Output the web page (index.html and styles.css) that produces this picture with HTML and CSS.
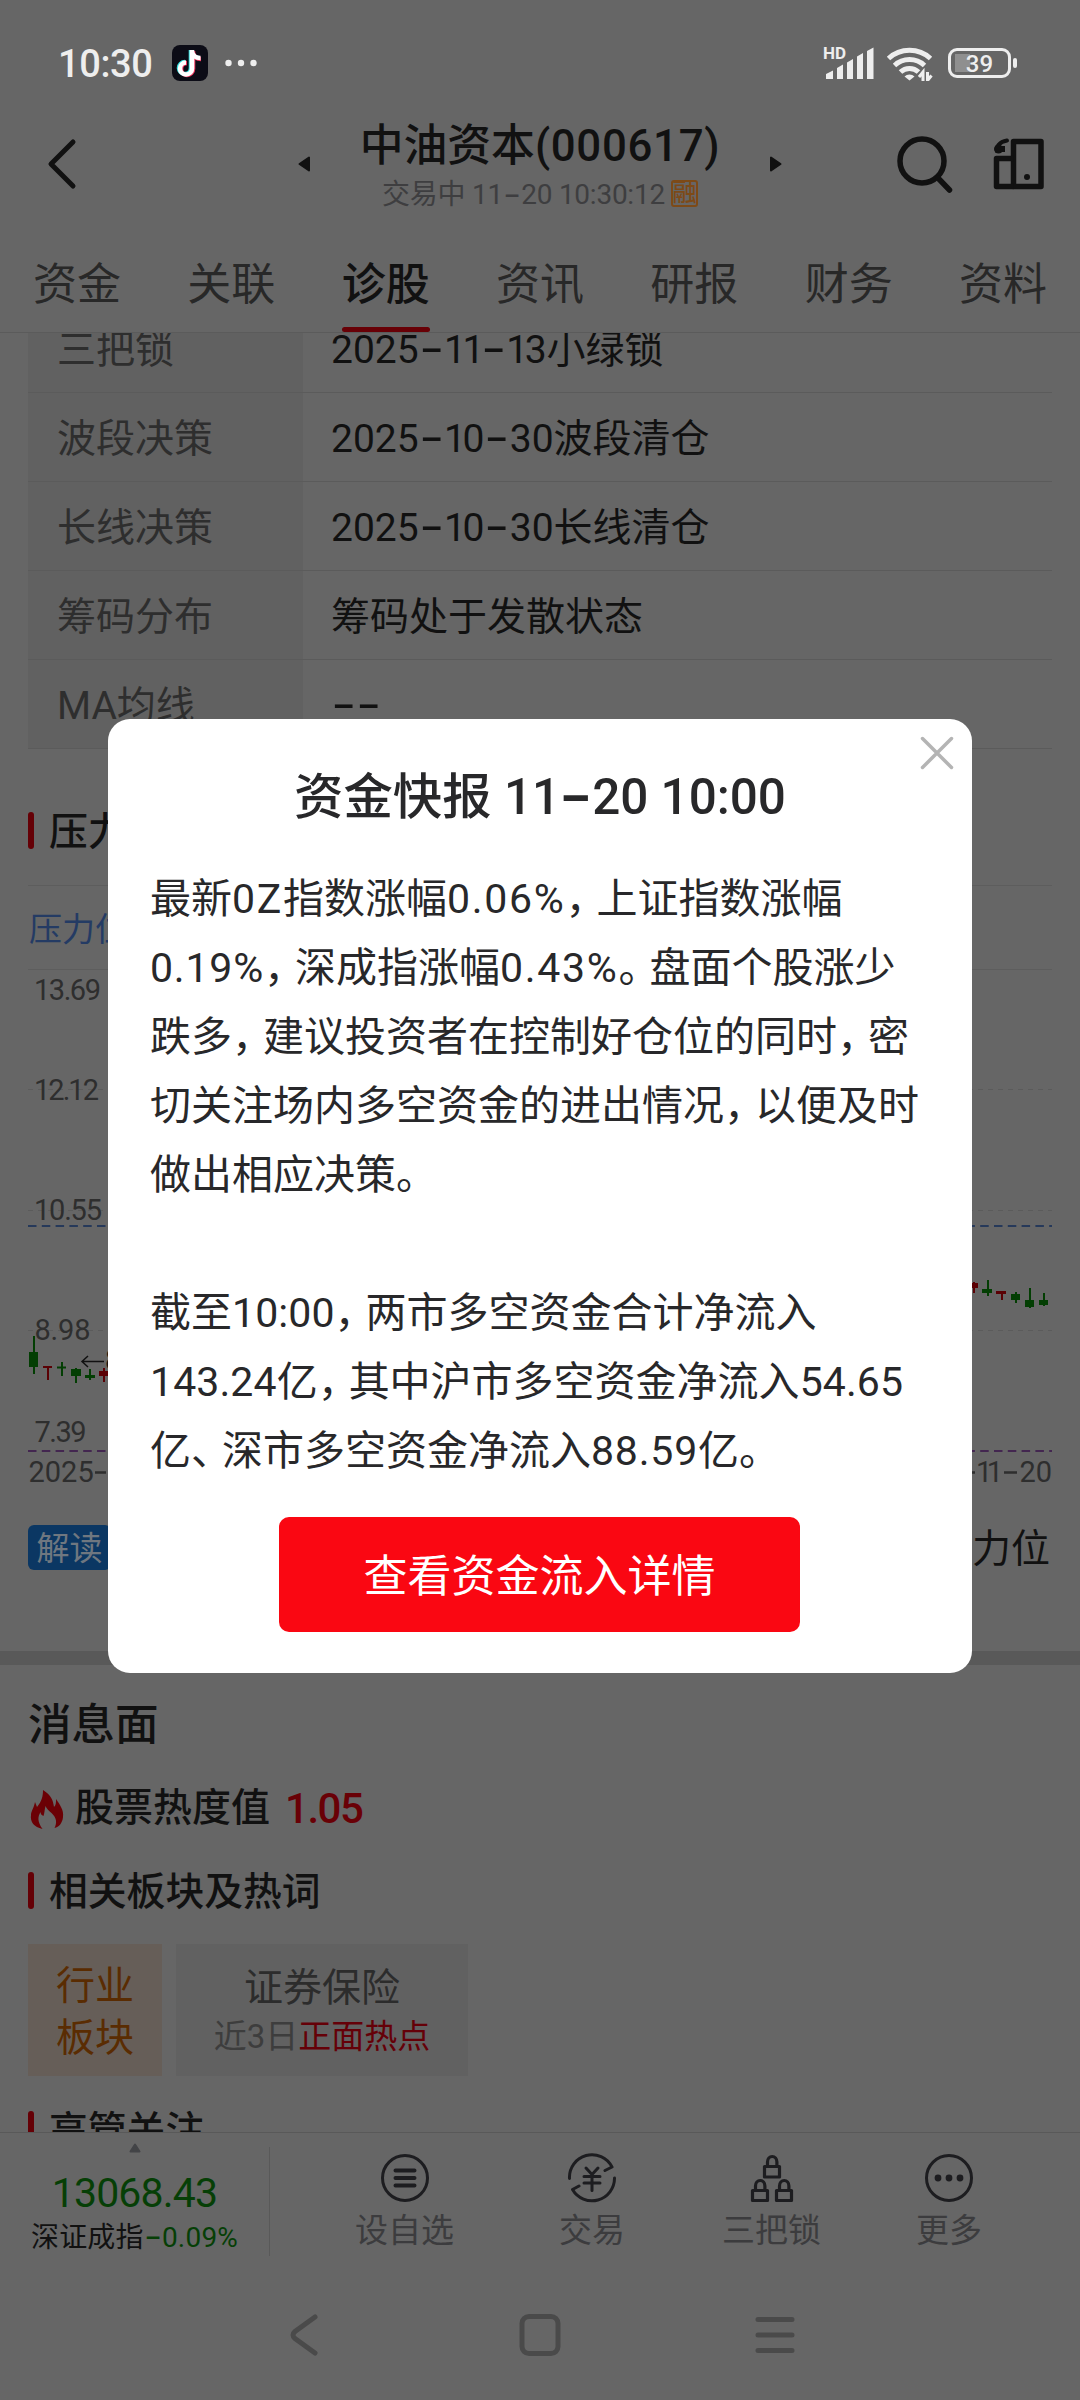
FILE: index.html
```html
<!DOCTYPE html>
<html lang="zh-CN">
<head>
<meta charset="utf-8">
<title>中油资本(000617)</title>
<link rel="stylesheet" href="styles.css">
</head>
<body>
<div class="screen">
  <header class="status">
    <span class="clock">10:30</span>
    <svg class="app" width="36" height="36" viewBox="0 0 36 36"><rect width="36" height="36" rx="8" fill="#0c0c16"/><g fill="none" stroke-width="4.6"><path d="M19 5v18a6 6 0 1 1-6-6M19 7c1 4 4 6 8 6" stroke="#35e0e0"/><path d="M21 6v18a6 6 0 1 1-6-6M21 8c1 4 4 6 8 6" stroke="#f0345c"/><path d="M20 5v18.500a6 6 0 1 1-6-6M20 7c1 4 4 6 8.500 6" stroke="#fff"/></g></svg>
    <svg class="dots" width="32" height="8" viewBox="0 0 32 8"><g fill="#eee"><circle cx="3.500" cy="4" r="3.200"/><circle cx="16" cy="4" r="3.200"/><circle cx="28.500" cy="4" r="3.200"/></g></svg>
    <div class="signal"><span class="hd">HD</span>
      <svg width="52" height="34" viewBox="0 0 52 34"><g fill="#eee"><path d="M3 28l7-3.500V33H3zM14 22l6-3.500V33h-6zM24 16.500l6-3.500V33h-6zM34 10.500l6-3.500V33h-6zM44 5l6.500-3.500V33H44z"/></g></svg></div>
    <svg class="wifi" width="48" height="36" viewBox="0 0 48 36"><g fill="none" stroke="#eee" stroke-width="5"><path d="M2.500 13.500a31 31 0 0 1 42 0"/><path d="M8.500 20.500a22 22 0 0 1 30 0"/><path d="M14.500 27a13 13 0 0 1 18 0"/></g><path d="M18.500 31.500a7 7 0 0 1 10 0l-5 4z" fill="#eee"/><path d="M37.500 36v-9.500l-5 5.500M41.500 26.500V36l4-5" fill="none" stroke="#666" stroke-width="5"/><path d="M37 36v-9l-4 5M41.500 27v8.500l4-5" fill="none" stroke="#eee" stroke-width="3"/></svg>
    <div class="battery"><span>39</span></div><i class="knob"></i>
  </header>

  <div class="top">
    <svg class="back" width="32" height="52" viewBox="0 0 32 52"><path d="M27 4L5 26l22 22" fill="none" stroke="#111" stroke-width="5" stroke-linecap="round" stroke-linejoin="round"/></svg>
    <svg class="prev" width="13" height="16" viewBox="0 0 13 16"><path d="M1.500 8L11 1.500v13z" fill="#111" stroke="#111" stroke-width="2" stroke-linejoin="round"/></svg>
    <div class="names">
      <h1>中油资本<span>(000617)</span></h1>
      <p><span>交易中 11<i class="h">-</i>20 10:30:12</span><b>融</b></p>
    </div>
    <svg class="next" width="13" height="16" viewBox="0 0 13 16"><path d="M11.500 8L2 1.500v13z" fill="#111" stroke="#111" stroke-width="2" stroke-linejoin="round"/></svg>
    <svg class="search" width="58" height="60" viewBox="0 0 58 60"><g fill="none" stroke="#111" stroke-width="5.500" stroke-linecap="round"><circle cx="26" cy="26" r="22"/><path d="M42 43l11.500 12"/></g></svg>
    <svg class="phone" width="52" height="52" viewBox="0 0 52 52"><g fill="none" stroke="#111" stroke-width="5.500" stroke-linejoin="round"><rect x="20.500" y="3.500" width="27.500" height="45"/><path d="M20.500 20.500H3.500v28h17"/></g><path d="M14 2.500C6 4 3 9 4 13" fill="none" stroke="#111" stroke-width="4" stroke-linecap="round"/><circle cx="5.500" cy="11" r="4.500" fill="#111"/><path d="M5 8h7v6H5z" fill="#111"/><circle cx="34" cy="39" r="3" fill="#111"/></svg>
  </div>

  <nav class="tabs"><a>资金</a><a>关联</a><a class="on">诊股</a><a>资讯</a><a>研报</a><a>财务</a><a>资料</a></nav>

  <main>
    <div class="table">
      <div class="tr"><span>三把锁</span><span>2025<i class="h">-</i><s class="n">11</s><i class="h">-</i><s class="n">1</s>3小绿锁</span></div>
      <div class="tr"><span>波段决策</span><span>2025<i class="h">-</i><s class="n">1</s>0<i class="h">-</i>30波段清仓</span></div>
      <div class="tr"><span>长线决策</span><span>2025<i class="h">-</i><s class="n">1</s>0<i class="h">-</i>30长线清仓</span></div>
      <div class="tr"><span>筹码分布</span><span>筹码处于发散状态</span></div>
      <div class="tr"><span>MA均线</span><span><i class="h">-</i><i class="h">-</i></span></div>
    </div>
    <h3 class="pressure">压力</h3>
    <p class="legend">压力位</p>
    <svg class="chart" width="1024" height="530" viewBox="28 970 1024 530">
      <g stroke="#5b5b5b" stroke-width="1" stroke-dasharray="5 5"><path d="M28 1089.500H1052M28 1210.500H1052M28 1330.500H1052"/></g>
      <path d="M28 1226H1052" stroke="#26395a" stroke-width="2" stroke-dasharray="8.500 5.300"/>
      <path d="M28 1451H1052" stroke="#432650" stroke-width="2" stroke-dasharray="8.500 5.300"/>
      <g class="scale"><text x="34" y="1000" textLength="67">13.69</text><text x="34" y="1100" textLength="65">12.12</text><text x="34" y="1220" textLength="68">10.55</text><text x="34.500" y="1340" textLength="56">8.98</text><text x="34.500" y="1442" textLength="52">7.39</text><text x="28.500" y="1482">2025</text><text x="1052" y="1482" text-anchor="end">20</text><text x="976" y="1482" textLength="27">11</text></g>
      <path d="M95 1472.500H106M972 1472.500H975M1004 1472.500H1017" stroke="#2e2e2e" stroke-width="2.500"/>
      <g fill="#033e03"><path d="M29 1352h9v15h-9zM33 1336h2v38h-2zM57 1366.500h9v2h-9zM61 1362h2v14h-2zM71 1369h10v7H71zM75 1368h2v15h-2zM85 1375h10v3H85zM89 1369h2v11h-2zM982 1289h10v4h-10zM987 1280h2v16h-2zM1011 1294h9v6h-9zM1015 1292h2v11h-2zM1025 1300h9v7h-9zM1029 1288h2v20h-2zM1039 1300h9v5h-9zM1043 1293h2v13h-2z"/></g>
      <g fill="#5a0004"><path d="M43 1366h9v2h-9zM47 1366h2v14h-2zM99 1371h10v5H99zM103 1368h2v14h-2zM969 1283h9v5h-9zM973 1282h2v11h-2zM996 1291h10v3h-10zM1001 1291h2v9h-2z"/></g>
      <path d="M104 1361.500H82M88 1356l-6 5.500 6 5.500" fill="none" stroke="#111" stroke-width="1.500"/>
      <text class="mark" x="105" y="1370">8</text>
    </svg>
    <div class="read"><b>解读</b><span>力位</span></div>
    <div class="gap"></div>
    <h2>消息面</h2>
    <p class="hot"><svg width="36" height="40" viewBox="0 0 36 40"><path d="M14 1c8 5 10 10 11 17 2-2 2-4 2-8 4 6 8 11 7 18-.5 6-4 10-8.500 11 2.500-5 2.500-10-3-15-3-2-5-5-6-7-1 4-1 7-2 10-2-1-3-2-3-4-3 5-3 10 2 17C5 38 1 33 2 26c0-4 3-7 4-13l2 5C13 12 14 7 14 1z" fill="#6b0005"/></svg><span>股票热度值</span><b>1.05</b></p>
    <h3>相关板块及热词</h3>
    <div class="cards">
      <div class="kind">行业<br>板块</div>
      <div class="card"><span>证券保险</span><small>近3日<em>正面热点</em></small></div>
    </div>
    <h3>高管关注</h3>
  </main>

  <footer class="bar">
    <div class="index">
      <svg width="12" height="10" viewBox="0 0 12 10"><path d="M6 1.500L10.500 8.500H1.500z" fill="#434447" stroke="#434447" stroke-width="2" stroke-linejoin="round"/></svg>
      <strong>13068.43</strong>
      <p>深证成指<span><i class="h">-</i>0.09%</span></p>
    </div>
    <div class="act a1"><svg width="50" height="50" viewBox="0 0 50 50"><g fill="none" stroke="#1d1d20" stroke-linecap="round"><circle cx="25" cy="25" r="22.500" stroke-width="3"/><path d="M15.500 17.500h19M15.500 25h19M15.500 32.500h19" stroke-width="4"/></g></svg><span>设自选</span></div>
    <div class="act a2"><svg width="50" height="50" viewBox="0 0 50 50"><g fill="none" stroke="#1d1d20" stroke-width="3" stroke-linecap="round" stroke-linejoin="round"><path d="M2.500 25.500A22.500 22.500 0 0 1 45 14L38 17.500M47.500 25A22.500 22.500 0 0 1 5.500 36.500L12 33"/><path d="M19 15l6 6.500 6-6.500M25 21.500V37.500M17 23.500h16M17 30h16"/></g></svg><span>交易</span></div>
    <div class="act a3"><svg width="50" height="50" viewBox="0 0 50 50"><g fill="none" stroke="#1d1d20" stroke-width="3.200" stroke-linejoin="round"><path d="M17.500 13.500h15v10.500h-15zM20.500 13.500V9a4.700 5.500 0 0 1 9.400 0v4.500M5.500 37.500h15V47.500h-15zM8.500 37.500v-4.500a4.700 5.500 0 0 1 9.400 0v4.500M29.500 37.500h15V47.500h-15zM32.500 37.500v-4.500a4.700 5.500 0 0 1 9.400 0v4.500"/></g></svg><span>三把锁</span></div>
    <div class="act a4"><svg width="50" height="50" viewBox="0 0 50 50"><circle cx="25" cy="25" r="22.500" fill="none" stroke="#1d1d20" stroke-width="3"/><g fill="#1d1d20"><circle cx="14" cy="25" r="3.400"/><circle cx="25" cy="25" r="3.400"/><circle cx="36" cy="25" r="3.400"/></g></svg><span>更多</span></div>
  </footer>
  <div class="keys">
    <svg width="30" height="44" viewBox="0 0 30 44"><path d="M26 4L6 18.500q-4 3.500 0 7L26 40" fill="none" stroke="#4a4a4a" stroke-width="5" stroke-linecap="round"/></svg>
    <svg class="home" width="42" height="44" viewBox="0 0 42 44"><rect x="3" y="3.500" width="36" height="37" rx="7" fill="none" stroke="#4a4a4a" stroke-width="5"/></svg>
    <svg width="40" height="44" viewBox="0 0 40 44"><path d="M3 6.500h34M3 22h34M3 37.500h34" fill="none" stroke="#4a4a4a" stroke-width="5" stroke-linecap="round"/></svg>
  </div>

  <section class="modal">
    <svg class="close" width="34" height="34" viewBox="0 0 34 34"><path d="M2.500 2.500l29 29M31.500 2.500l-29 29" stroke="#b4b4b4" stroke-width="3.500" stroke-linecap="round"/></svg>
    <h2>资金快报 11<i class="h">-</i>20 10:00</h2>
    <div class="text">
      <p>最新<s class="w">0Z</s>指数涨幅<s class="w">0.06%</s><u>，</u>上证指数涨幅</p>
      <p><s>0.19%</s><u>，</u>深成指涨幅<s class="w">0.43%</s><u>。</u>盘面个股涨少</p>
      <p>跌多<u>，</u>建议投资者在控制好仓位的同时<u>，</u>密</p>
      <p>切关注场内多空资金的进出情况<u>，</u>以便及时</p>
      <p>做出相应决策<u>。</u></p>
      <p>&nbsp;</p>
      <p>截至<s class="t">10:00</s><u>，</u>两市多空资金合计净流入</p>
      <p><s class="t">143.24</s>亿<u>，</u>其中沪市多空资金净流入<s class="t">54.65</s></p>
      <p>亿<u>、</u>深市多空资金净流入<s>88.59</s>亿<u>。</u></p>
    </div>
    <button>查看资金流入详情</button>
  </section>
</div>
</body>
</html>
```
FILE: styles.css
```css
* { box-sizing: border-box; margin: 0; padding: 0; }
body { background: #666; font-family: Roboto, "Noto Sans CJK SC", sans-serif; color: #111; }
svg { display: block; flex: none; }
i, em { font-style: normal; }
s, u { text-decoration: none; }
.screen { position: relative; display: flex; flex-direction: column; width: 1080px; height: 2400px; overflow: hidden; background: #666; white-space: nowrap; }
.h { display: inline-block; width: .65em; text-align: center; transform: scale(1.9, 1.25); transform-origin: 50% 57%; letter-spacing: 0; }

.status { display: flex; align-items: center; height: 110px; padding: 16px 63px 0 58px; color: #eee; }
.clock { width: 94px; padding-top: 2px; font-size: 38px; font-weight: 500; letter-spacing: -.4px; }
.app { margin-left: 20px; }
.dots { margin: 0 auto 0 17px; }
.signal { position: relative; width: 52px; height: 34px; }
.signal .hd { position: absolute; left: 0; top: -2px; font-size: 17px; line-height: 18px; font-weight: 700; }
.wifi { margin-left: 11px; }
.battery { display: flex; align-items: center; justify-content: center; width: 63px; height: 30px; margin-left: 14px; border: 3px solid #eee; border-radius: 9px; font-size: 24px; font-weight: 500; background: linear-gradient(#8f8f8f, #8f8f8f) 4px 3px / 15px 18px no-repeat; line-height: 24px; }
.battery span { padding-top: 2px; }
.knob { width: 4px; height: 10px; margin-left: 2px; border-radius: 2px; background: #eee; }

.top { display: flex; height: 125px; padding-left: 46px; }
.back { margin-top: 28px; }
.prev { margin: 46px 0 0 220px; }
.names { width: 458px; text-align: center; }
.names h1 { margin-top: 10px; font-size: 43.800px; line-height: 52px; font-weight: 500; }
.names h1 span { letter-spacing: .7px; }
.names p { display: flex; justify-content: center; align-items: center; gap: 6px; height: 32px; margin-top: 7px; font-size: 28px; line-height: 32px; letter-spacing: -.25px; color: #3e3e40; }
.names b { display: block; width: 27px; height: 27px; margin-top: -3px; border: 2px solid #7d4a17; border-radius: 3px; font-size: 24px; line-height: 22px; font-weight: 500; color: #7d4a17; display: flex; justify-content: center; }
.next { margin: 46px 0 0 0; }
.search { margin: 25px 0 0 114px; }
.phone { margin: 28px 0 0 39px; }

.tabs { display: flex; justify-content: space-between; height: 98px; padding: 0 33px; border-bottom: 1px solid #5b5b5b; font-size: 44px; line-height: 101px; color: #282828; }
.tabs a { position: relative; height: 97px; }
.tabs .on { color: #111; font-weight: 500; }
.tabs .on::after { content: ""; position: absolute; left: 0; right: 0; bottom: 0; height: 5px; border-radius: 3px; background: #680006; }

main { height: 1799px; padding: 0 28px; overflow: hidden; }
.table { margin-top: -29px; }
.tr { display: flex; height: 89px; border-bottom: 1px solid #5b5b5b; font-size: 39px; line-height: 92px; }
.tr span:first-child { width: 275px; padding-left: 29px; background: #616161; color: #2e2e2e; }
.tr span:last-child { padding-left: 28px; }
.n { letter-spacing: -3.500px; }
h3 { display: flex; align-items: center; height: 52px; padding-top: 4px; font-size: 38.800px; line-height: 52px; font-weight: 500; }
h3::before { content: ""; width: 6px; height: 37px; margin: 0 15px 4px 0; border-radius: 3px; background: #650006; }
.pressure { margin-top: 55px; }
.legend { height: 85px; margin-top: 29px; border: solid #5d5d5d; border-width: 1px 0; padding-left: 1px; font-size: 33px; line-height: 87px; color: #243b64; }
.scale { font-size: 29px; fill: #2e2e2e; }
.mark { font-size: 29px; fill: #111; }
.read { display: flex; justify-content: space-between; align-items: center; height: 46px; margin-top: 24px; font-size: 39px; }
.read b { width: 83px; height: 45px; border-radius: 6px; background: #0b3763; color: #6f7780; font-size: 33px; line-height: 48px; font-weight: 400; text-align: center; }
.read span { margin: -4px 2px 0 0; }
.gap { height: 14px; margin: 81px -28px 0; background: #595959; }
main h2 { margin-top: 31px; font-size: 43.500px; line-height: 60px; font-weight: 500; }
.hot { display: flex; align-items: center; height: 52px; margin-top: 27px; padding-left: 1px; font-size: 39px; line-height: 52px; }
.hot span { margin: -3px 0 0 10px; font-weight: 500; }
.hot b { margin-left: 15px; font-size: 42px; font-weight: 500; letter-spacing: -1.500px; color: #690006; }
.hot + h3 { margin-top: 29px; }
.cards { display: flex; gap: 14px; height: 132px; margin: 28px 0 27px; }
.kind { width: 134px; padding-top: 16px; background: #665e58; color: #5a2c02; font-size: 39px; line-height: 52px; text-align: center; }
.card { display: flex; flex-direction: column; align-items: center; width: 292px; padding-top: 17px; background: #616161; font-size: 39px; line-height: 54px; color: #2c2c2c; }
.card small { font-size: 33px; line-height: 44px; color: #3d3d3d; }
.card em { color: #650008; }

.bar { display: flex; height: 138px; border-top: 1px solid #595959; }
.index { display: flex; flex-direction: column; align-items: center; width: 269px; }
.index svg { margin-top: 10px; }
.index strong { margin-top: 14px; font-size: 41px; line-height: 52px; font-weight: 400; letter-spacing: -.8px; color: #063f06; }
.index p { font-size: 28px; line-height: 50px; letter-spacing: .2px; margin-top: -6px; }
.index p span { color: #063f06; }
.act { display: flex; flex-direction: column; align-items: center; width: 178px; padding-top: 20px; font-size: 33px; line-height: 48px; color: #3c3c3e; }
.act span { margin-top: 4px; }
.a1 { width: 271px; background: linear-gradient(#595959, #595959) 0 14px / 1px 109px no-repeat; }
.a2 { width: 104px; }
.a3 { width: 255px; }
.a4 { width: 100px; }
.keys { display: flex; justify-content: space-between; padding: 43px 285px 0 289px; }
.home { margin-left: 5px; }

.modal { position: absolute; left: 108px; top: 719px; width: 864px; height: 954px; border-radius: 22px; background: #fff; color: #28282a; }
.close { position: absolute; right: 18px; top: 17px; }
.modal h2 { margin-top: 43px; text-align: center; font-size: 49.400px; line-height: 70px; font-weight: 500; }
.text { padding: 33px 0 0 42px; font-size: 41px; line-height: 69px; }
.text s { letter-spacing: .8px; }
.text .w { letter-spacing: 1.700px; }
.text .t { letter-spacing: .1px; }
.text u { letter-spacing: -10px; }
.modal button { display: block; width: 521px; height: 115px; margin: 31px auto 0 171px; border: 0; border-radius: 10px; background: #fa0712; color: #fff; font: 44px/115px Roboto, "Noto Sans CJK SC", sans-serif; padding-top: 3px; }
```
